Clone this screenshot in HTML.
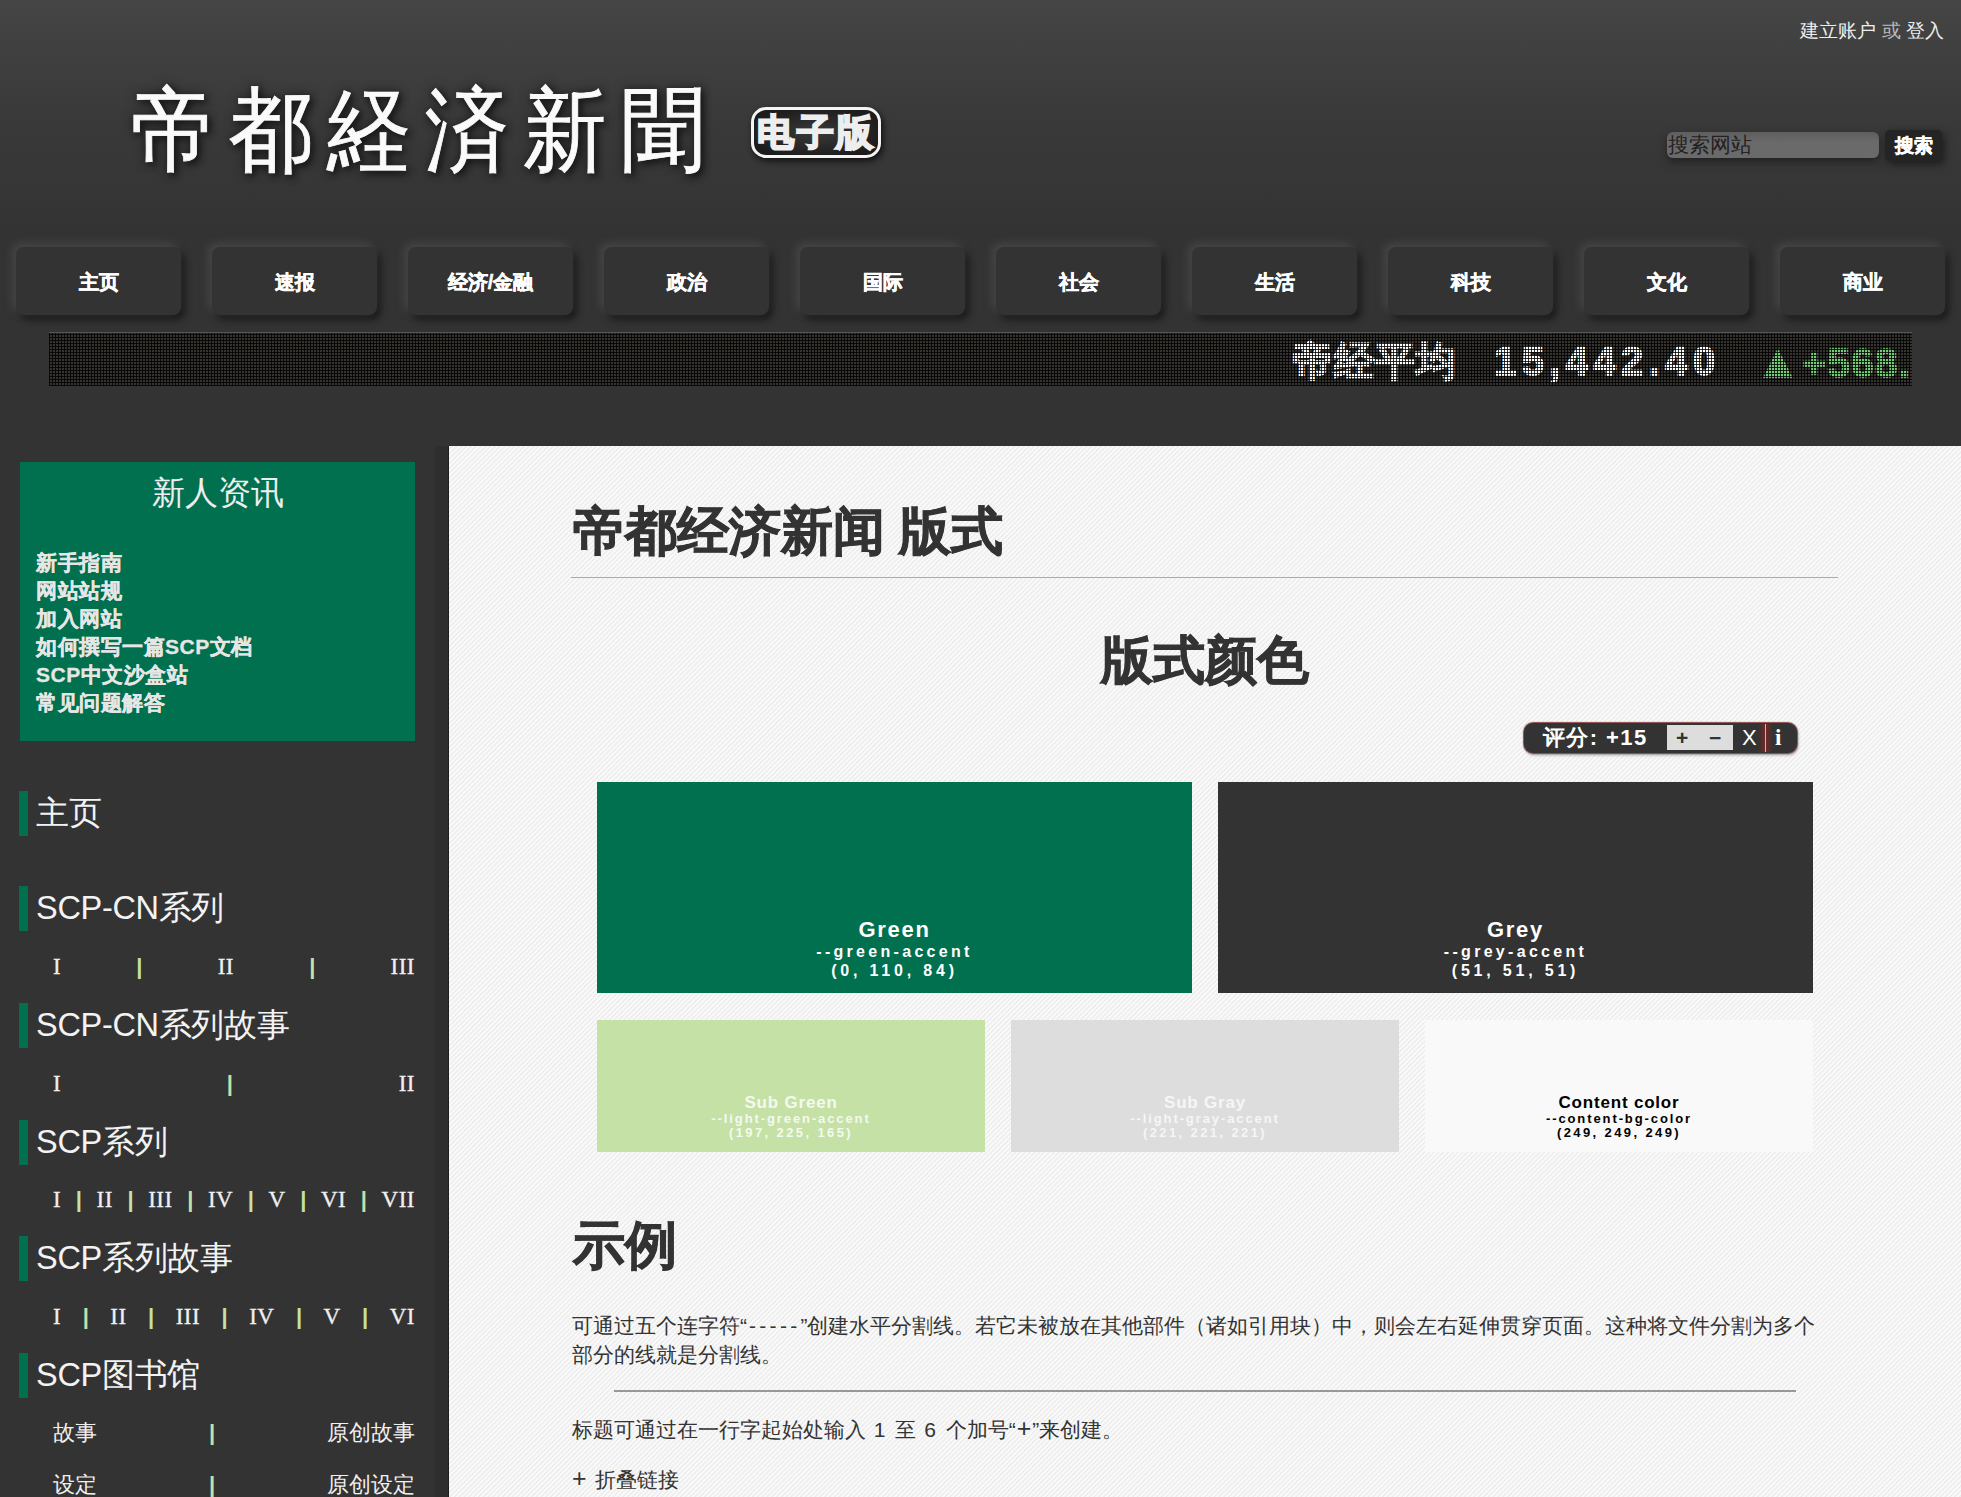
<!DOCTYPE html>
<html><head><meta charset="utf-8">
<style>
*{box-sizing:border-box;margin:0;padding:0}
html,body{width:1961px;height:1497px;overflow:hidden}
body{background:#333;font-family:"Liberation Sans",sans-serif;color:#333;position:relative}
#header{position:absolute;left:0;top:0;width:1961px;height:446px;background:linear-gradient(to bottom,#454545 0px,#3a3a3a 110px,#333 235px,#333 446px)}
.abs{position:absolute}
#login{right:17px;top:18px;font-size:19px;color:#eee;white-space:nowrap}
#login .or{color:#bbb}
#logo{left:131px;top:65px;font-family:"Liberation Serif",serif;font-size:84px;color:#fafafa;letter-spacing:14px;transform:scaleY(1.1);transform-origin:0 0;white-space:nowrap;text-shadow:0 0 10px #1a1a1a,3px 3px 7px #111;line-height:120px;-webkit-text-stroke:.8px #fafafa}
#badge{left:751px;top:107px;width:130px;height:51px;border:3px solid #f4f4f4;border-radius:15px;background:radial-gradient(ellipse at 50% 50%,#3a3a3a,#1c1c1c 80%);box-shadow:2px 3px 6px #111}
#badge span{position:absolute;left:3px;top:2px;font-size:37px;font-weight:bold;color:#eee;line-height:42px;white-space:nowrap;-webkit-text-stroke:2px #eee;letter-spacing:2.5px}
#search{left:1667px;top:132px;width:212px;height:26px;background:linear-gradient(#5e5e5e,#6a6a6a 40%);border-radius:6px;box-shadow:0 4px 8px #222;font-size:21px;color:#222;line-height:26px;padding-left:1px;white-space:nowrap}
#sbtn{left:1885px;top:130px;width:57px;height:31px;background:#242424;border-radius:5px;box-shadow:2px 3px 8px #1a1a1a;color:#fff;font-weight:bold;font-size:19px;line-height:32px;text-align:center;-webkit-text-stroke:.5px #fff}
.nav{position:absolute;top:247px;width:165px;height:68px;background:#333;border-radius:8px;box-shadow:-4px -4px 8px #464646,4px 5px 7px #1c1c1c;color:#fff;font-weight:bold;font-size:20px;line-height:70px;text-align:center;white-space:nowrap;-webkit-text-stroke:.5px #fff}
#ticker{left:49px;top:332px;width:1863px;height:54px;background:#35332f;border-top:1px solid #555;overflow:hidden}
#ticker .txt{position:absolute;top:0;font-size:40px;font-weight:bold;line-height:56px;white-space:nowrap;color:#fff;-webkit-text-stroke:1.5px #fff}
#ticker .t1{left:1244px;font-size:40px;letter-spacing:1px}
#ticker .t2{left:1445px;letter-spacing:5.4px}
#ticker .t3{left:1706px;color:#7c7;-webkit-text-stroke:1.5px #7c7;letter-spacing:1.5px}
#ticker .grid{position:absolute;left:0;top:0;right:0;bottom:0;background:repeating-linear-gradient(90deg,rgba(0,0,0,.8) 0 1px,transparent 1px 3px),repeating-linear-gradient(0deg,rgba(0,0,0,.8) 0 1px,transparent 1px 3px)}
/* sidebar */
#side{position:absolute;left:0;top:446px;width:449px;height:1051px;background:#333}
#newbox{left:20px;top:462px;width:395px;height:279px;background:#00704f}
#newbox h3{position:absolute;left:0;width:100%;top:11px;text-align:center;font-weight:normal;font-size:33px;color:#eee;line-height:40px}
#newbox ul{position:absolute;left:16px;top:87px;list-style:none;font-size:21px;letter-spacing:.5px;font-weight:bold;color:#e6e6e6;line-height:28px;-webkit-text-stroke:.3px #e6e6e6}
.sh{position:absolute;left:19px;height:45px;border-left:9px solid #00704f;padding-left:8px;font-size:32.5px;letter-spacing:-.3px;color:#f3f3f3;line-height:45px;white-space:nowrap}
.row{position:absolute;left:53px;width:362px;display:flex;justify-content:space-between;font-size:22px;color:#f0f0f0;line-height:30px;white-space:nowrap}
.row b{font-weight:bold;color:#c5e1a5;font-family:"Liberation Sans",sans-serif}
.row span.r{font-family:"Liberation Serif",serif;font-size:23px;letter-spacing:.5px;-webkit-text-stroke:.3px #f0f0f0}
/* content */
#content{position:absolute;left:449px;top:446px;width:1512px;height:1051px;background-color:#f2f2f2;background-image:repeating-linear-gradient(135deg,#f9f9f9 0,#f9f9f9 1.4px,#ececec 2.1px,#ececec 2.7px,#f9f9f9 3.4px)}
.h1{position:absolute;font-size:52px;font-weight:bold;color:#333;white-space:nowrap;line-height:60px;-webkit-text-stroke:.9px #333}
.hr{position:absolute;height:1px;background:#aaa}
.cbox{position:absolute;text-align:center;color:#fff;font-weight:bold}
.cbox .n{position:absolute;left:0;right:0;white-space:nowrap}
.cbox .big{position:absolute;left:0;right:0;font-size:22px;letter-spacing:1.7px;line-height:24px;white-space:nowrap}
.cbox .sm{position:absolute;left:0;right:0;font-size:16px;letter-spacing:3.3px;line-height:20px;white-space:nowrap}
.cbox .big2{position:absolute;left:0;right:0;font-size:17px;letter-spacing:.8px;line-height:18px;white-space:nowrap}
.cbox .sm2{position:absolute;left:0;right:0;font-size:13px;letter-spacing:1.9px;line-height:16px;white-space:nowrap}
.cbox .sm.v{letter-spacing:3.8px}
.cbox .sm2.v{letter-spacing:2.4px}
.p{position:absolute;font-size:21px;color:#333;line-height:29px;white-space:nowrap}
#rate{left:1524px;top:723px;width:273px;height:30px;background:#333;border-radius:9px;box-shadow:0 0 1px 1px #8a4a4a,1px 2px 3px #999}
#rate span{position:absolute;top:0;line-height:30px;color:#fff;white-space:nowrap}
#rate .r1{left:19px;font-weight:bold;font-size:22px;letter-spacing:1.4px}
#rate .r2{left:143px;top:2px;width:66px;height:25px;background:#ddd;line-height:25px;color:#333;font-weight:bold;font-size:21px}
#rate .r2 i{font-style:normal;position:absolute;top:0}
#rate .r2 i:first-child{left:9px}#rate .r2 i+i{left:42px}
#rate .r3{left:218px;font-size:22px}
#rate .r4{left:234px;top:1px;width:15px;height:28px;background:linear-gradient(90deg,rgba(90,40,40,0),rgba(120,40,40,.85) 45%,#d9b0b0 47%,#d9b0b0 53%,rgba(120,40,40,.85) 55%,rgba(90,40,40,0))}
#rate .r5{left:251px;font-weight:bold;font-size:23px;font-family:"Liberation Serif",serif}
</style></head><body>
<div id="header"></div>
<div class="abs" id="login">建立账户 <span class="or">或</span> 登入</div>
<div class="abs" id="logo">帝都経済新聞</div>
<div class="abs" id="badge"><span>电子版</span></div>
<div class="abs" id="search">搜索网站</div>
<div class="abs" id="sbtn">搜索</div>

<div class="nav" style="left:16px">主页</div>
<div class="nav" style="left:212px">速报</div>
<div class="nav" style="left:408px">经济/金融</div>
<div class="nav" style="left:604px">政治</div>
<div class="nav" style="left:800px">国际</div>
<div class="nav" style="left:996px">社会</div>
<div class="nav" style="left:1192px">生活</div>
<div class="nav" style="left:1388px">科技</div>
<div class="nav" style="left:1584px">文化</div>
<div class="nav" style="left:1780px">商业</div>

<div class="abs" id="ticker"><div class="txt t1">帝经平均</div><div class="txt t2">15,442.40</div><div class="txt t3"><span style="font-size:46px;letter-spacing:2px">▲</span>+568.</div><div class="grid"></div></div>

<div id="side"></div>
<div class="abs" id="newbox"><h3>新人资讯</h3>
<ul><li>新手指南</li><li>网站站规</li><li>加入网站</li><li>如何撰写一篇SCP文档</li><li>SCP中文沙盒站</li><li>常见问题解答</li></ul></div>

<div class="sh" style="top:791px">主页</div>
<div class="sh" style="top:886px">SCP-CN系列</div>
<div class="row" style="top:952px"><span class="r">I</span><b>|</b><span class="r">II</span><b>|</b><span class="r">III</span></div>
<div class="sh" style="top:1003px">SCP-CN系列故事</div>
<div class="row" style="top:1069px"><span class="r">I</span><b>|</b><span class="r">II</span></div>
<div class="sh" style="top:1120px">SCP系列</div>
<div class="row" style="top:1185px"><span class="r">I</span><b>|</b><span class="r">II</span><b>|</b><span class="r">III</span><b>|</b><span class="r">IV</span><b>|</b><span class="r">V</span><b>|</b><span class="r">VI</span><b>|</b><span class="r">VII</span></div>
<div class="sh" style="top:1236px">SCP系列故事</div>
<div class="row" style="top:1302px"><span class="r">I</span><b>|</b><span class="r">II</span><b>|</b><span class="r">III</span><b>|</b><span class="r">IV</span><b>|</b><span class="r">V</span><b>|</b><span class="r">VI</span></div>
<div class="sh" style="top:1353px">SCP图书馆</div>
<div class="row" style="top:1418px"><span>故事</span><b>|</b><span>原创故事</span></div>
<div class="row" style="top:1470px"><span>设定</span><b>|</b><span>原创设定</span></div>

<div class="abs" style="left:435px;top:446px;width:13px;height:1051px;background:#2e2e2e"></div><div class="abs" style="left:448px;top:446px;width:1px;height:1051px;background:#1e1e1e"></div>
<div id="content"></div>
<div class="h1" style="left:573px;top:501px">帝都经济新闻 版式</div>
<div class="hr" style="left:571px;top:577px;width:1267px"></div>
<div class="h1" style="left:1101px;top:630px">版式颜色</div>
<div class="abs" id="rate"><span class="r1">评分: +15</span><span class="r2"><i>+</i><i>−</i></span><span class="r3">X</span><span class="r4"></span><span class="r5">i</span></div>

<div class="cbox" style="left:597px;top:782px;width:595px;height:211px;background:#00704f"><div class="big" style="top:136px">Green</div><div class="sm" style="top:160px">--green-accent</div><div class="sm v" style="top:179px">(0, 110, 84)</div></div>
<div class="cbox" style="left:1218px;top:782px;width:595px;height:211px;background:#333"><div class="big" style="top:136px">Grey</div><div class="sm" style="top:160px">--grey-accent</div><div class="sm v" style="top:179px">(51, 51, 51)</div></div>
<div class="cbox" style="left:597px;top:1020px;width:388px;height:132px;background:#c5e1a5;color:#f4faf0"><div class="big2" style="top:74px">Sub Green</div><div class="sm2" style="top:91px">--light-green-accent</div><div class="sm2 v" style="top:105px">(197, 225, 165)</div></div>
<div class="cbox" style="left:1011px;top:1020px;width:388px;height:132px;background:#ddd;color:#f6f6f6"><div class="big2" style="top:74px">Sub Gray</div><div class="sm2" style="top:91px">--light-gray-accent</div><div class="sm2 v" style="top:105px">(221, 221, 221)</div></div>
<div class="cbox" style="left:1425px;top:1020px;width:388px;height:132px;background:#f9f9f9;color:#000"><div class="big2" style="top:74px">Content color</div><div class="sm2" style="top:91px">--content-bg-color</div><div class="sm2 v" style="top:105px">(249, 249, 249)</div></div>

<div class="h1" style="left:573px;top:1215px">示例</div>
<div class="p" style="left:572px;top:1311px">可通过五个连字符“<span style="letter-spacing:3.3px;margin-left:2px">-----</span>”创建水平分割线。若它未被放在其他部件（诸如引用块）中，则会左右延伸贯穿页面。这种将文件分割为多个<br>部分的线就是分割线。</div>
<div class="hr" style="left:614px;top:1390px;width:1182px;height:2px;background:#999"></div>
<div class="p" style="left:572px;top:1414px">标题可通过在一行字起始处输入<span style="letter-spacing:2px"> 1 </span>至<span style="letter-spacing:2px"> 6 </span>个加号“<span style="font-size:25px;margin:0 1px">+</span>”来创建。</div>
<div class="p" style="left:572px;top:1464px"><span style="font-size:25px;margin-right:8px">+</span>折叠链接</div>
</body></html>
